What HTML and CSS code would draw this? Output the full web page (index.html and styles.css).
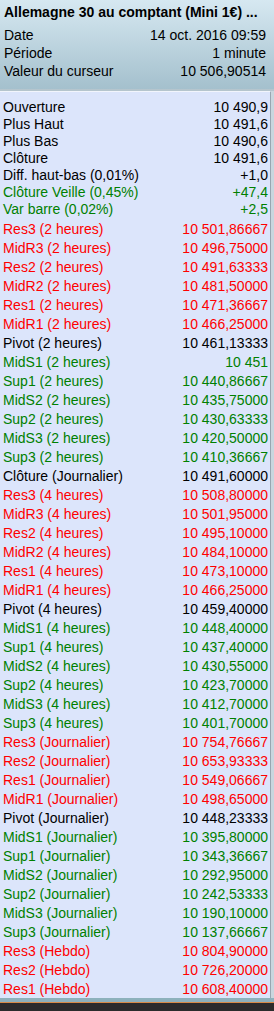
FILE: index.html
```html
<!DOCTYPE html>
<html lang="fr">
<head>
<meta charset="utf-8">
<title>Allemagne 30</title>
<link rel="stylesheet" href="styles.css">
</head>
<body>
<div class="window">
  <div class="header">
    <div class="title">Allemagne 30 au comptant (Mini 1€) ...</div>
    <div class="hrows">
      <div class="hrow"><span>Date</span><span>14 oct. 2016 09:59</span></div>
      <div class="hrow"><span>Période</span><span>1 minute</span></div>
      <div class="hrow"><span>Valeur du curseur</span><span>10 506,90514</span></div>
    </div>
  </div>
  <div class="sep"></div>
  <div class="body">
    <div class="panel">
      <div class="group g1">
        <div class="row"><span>Ouverture</span><span>10 490,9</span></div>
        <div class="row"><span>Plus Haut</span><span>10 491,6</span></div>
        <div class="row"><span>Plus Bas</span><span>10 490,6</span></div>
        <div class="row"><span>Clôture</span><span>10 491,6</span></div>
        <div class="row"><span>Diff. haut-bas (0,01%)</span><span>+1,0</span></div>
        <div class="row green"><span>Clôture Veille (0,45%)</span><span>+47,4</span></div>
        <div class="row green"><span>Var barre (0,02%)</span><span>+2,5</span></div>
      </div>
      <div class="group g2">
        <div class="row red"><span>Res3 (2 heures)</span><span>10 501,86667</span></div>
        <div class="row red"><span>MidR3 (2 heures)</span><span>10 496,75000</span></div>
        <div class="row red"><span>Res2 (2 heures)</span><span>10 491,63333</span></div>
        <div class="row red"><span>MidR2 (2 heures)</span><span>10 481,50000</span></div>
        <div class="row red"><span>Res1 (2 heures)</span><span>10 471,36667</span></div>
        <div class="row red"><span>MidR1 (2 heures)</span><span>10 466,25000</span></div>
        <div class="row"><span>Pivot (2 heures)</span><span>10 461,13333</span></div>
        <div class="row green"><span>MidS1 (2 heures)</span><span>10 451</span></div>
        <div class="row green"><span>Sup1 (2 heures)</span><span>10 440,86667</span></div>
        <div class="row green"><span>MidS2 (2 heures)</span><span>10 435,75000</span></div>
        <div class="row green"><span>Sup2 (2 heures)</span><span>10 430,63333</span></div>
        <div class="row green"><span>MidS3 (2 heures)</span><span>10 420,50000</span></div>
        <div class="row green"><span>Sup3 (2 heures)</span><span>10 410,36667</span></div>
        <div class="row"><span>Clôture (Journalier)</span><span>10 491,60000</span></div>
        <div class="row red"><span>Res3 (4 heures)</span><span>10 508,80000</span></div>
        <div class="row red"><span>MidR3 (4 heures)</span><span>10 501,95000</span></div>
        <div class="row red"><span>Res2 (4 heures)</span><span>10 495,10000</span></div>
        <div class="row red"><span>MidR2 (4 heures)</span><span>10 484,10000</span></div>
        <div class="row red"><span>Res1 (4 heures)</span><span>10 473,10000</span></div>
        <div class="row red"><span>MidR1 (4 heures)</span><span>10 466,25000</span></div>
        <div class="row"><span>Pivot (4 heures)</span><span>10 459,40000</span></div>
        <div class="row green"><span>MidS1 (4 heures)</span><span>10 448,40000</span></div>
        <div class="row green"><span>Sup1 (4 heures)</span><span>10 437,40000</span></div>
        <div class="row green"><span>MidS2 (4 heures)</span><span>10 430,55000</span></div>
        <div class="row green"><span>Sup2 (4 heures)</span><span>10 423,70000</span></div>
        <div class="row green"><span>MidS3 (4 heures)</span><span>10 412,70000</span></div>
        <div class="row green"><span>Sup3 (4 heures)</span><span>10 401,70000</span></div>
        <div class="row red"><span>Res3 (Journalier)</span><span>10 754,76667</span></div>
        <div class="row red"><span>Res2 (Journalier)</span><span>10 653,93333</span></div>
        <div class="row red"><span>Res1 (Journalier)</span><span>10 549,06667</span></div>
        <div class="row red"><span>MidR1 (Journalier)</span><span>10 498,65000</span></div>
        <div class="row"><span>Pivot (Journalier)</span><span>10 448,23333</span></div>
        <div class="row green"><span>MidS1 (Journalier)</span><span>10 395,80000</span></div>
        <div class="row green"><span>Sup1 (Journalier)</span><span>10 343,36667</span></div>
        <div class="row green"><span>MidS2 (Journalier)</span><span>10 292,95000</span></div>
        <div class="row green"><span>Sup2 (Journalier)</span><span>10 242,53333</span></div>
        <div class="row green"><span>MidS3 (Journalier)</span><span>10 190,10000</span></div>
        <div class="row green"><span>Sup3 (Journalier)</span><span>10 137,66667</span></div>
        <div class="row red"><span>Res3 (Hebdo)</span><span>10 804,90000</span></div>
        <div class="row red"><span>Res2 (Hebdo)</span><span>10 726,20000</span></div>
        <div class="row red"><span>Res1 (Hebdo)</span><span>10 608,40000</span></div>
      </div>
    </div>
  </div>
  <div class="footer">
    <div class="band"></div>
    <div class="accent"></div>
    <div class="dark"></div>
  </div>
</div>
</body>
</html>
```

FILE: styles.css
```css
html, body {
  margin: 0;
  padding: 0;
}
body {
  width: 274px;
  height: 1011px;
  overflow: hidden;
  font-family: "Liberation Sans", Arial, sans-serif;
  font-size: 14px;
  color: #000;
  background: #2a2a2a;
}
.window {
  display: flex;
  flex-direction: column;
  height: 1011px;
}
.header {
  height: 89px;
  box-sizing: border-box;
  padding: 3px 8px 0 4px;
  background: linear-gradient(#d6e8f1, #a4c0cd);
}
.title {
  font-weight: bold;
  height: 18px;
  line-height: 18px;
  white-space: nowrap;
}
.hrows {
  margin-top: 5px;
}
.hrow {
  display: flex;
  justify-content: space-between;
  height: 18px;
  line-height: 18px;
  white-space: nowrap;
}
.sep {
  height: 2px;
  background: #b5c5cd;
}
.body {
  height: 907px;
  background: #c9d6de;
  display: flex;
}
.panel {
  flex: 1;
  margin-right: 3px;
  background: #dce5fb;
  border-top: 1px solid #f2f5fc;
  border-right: 1px solid #98a6b1;
  padding: 7px 2px 0 3px;
  overflow: hidden;
}
.row {
  display: flex;
  justify-content: space-between;
  white-space: nowrap;
}
.g1 .row {
  height: 17px;
  line-height: 17px;
}
.g2 {
  margin-top: 2px;
}
.g2 .row {
  height: 19px;
  line-height: 19px;
}
.red {
  color: #ff0000;
}
.green {
  color: #008000;
}
.footer {
  flex: 1;
  display: flex;
  flex-direction: column;
}
.band {
  height: 4px;
  background: #8db1bc;
}
.accent {
  height: 1px;
  background: #d98a46;
}
.dark {
  flex: 1;
  background: #2b2b2b;
}
```
